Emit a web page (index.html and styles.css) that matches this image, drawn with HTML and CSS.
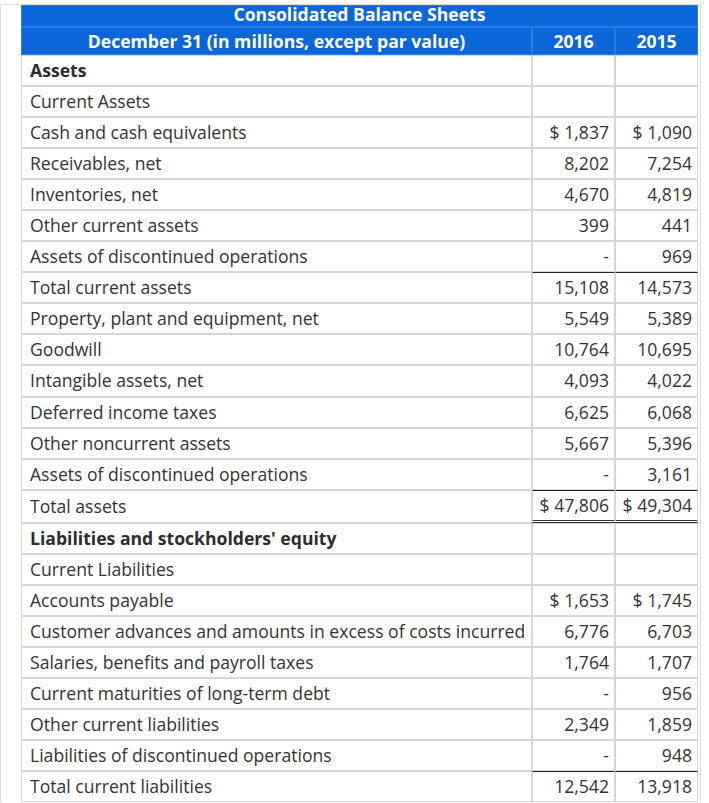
FILE: index.html
```html
<!DOCTYPE html>
<html>
<head>
<meta charset="utf-8">
<link rel="stylesheet" href="styles.css">
</head>
<body>
<div class="frame">
<table class="sheet">
  <colgroup><col class="c-label"><col class="c-val"><col class="c-val"></colgroup>
  <thead>
    <tr class="h1"><th colspan="3">Consolidated Balance Sheets</th></tr>
    <tr class="h2"><th>December 31 (in millions, except par value)</th><th>2016</th><th>2015</th></tr>
  </thead>
  <tbody>
    <tr class="sec"><td>Assets</td><td></td><td></td></tr>
    <tr><td>Current Assets</td><td></td><td></td></tr>
    <tr><td>Cash and cash equivalents</td><td class="n">$ 1,837</td><td class="n">$ 1,090</td></tr>
    <tr><td>Receivables, net</td><td class="n">8,202</td><td class="n">7,254</td></tr>
    <tr><td>Inventories, net</td><td class="n">4,670</td><td class="n">4,819</td></tr>
    <tr><td>Other current assets</td><td class="n">399</td><td class="n">441</td></tr>
    <tr><td>Assets of discontinued operations</td><td class="n">-</td><td class="n">969</td></tr>
    <tr class="tot"><td>Total current assets</td><td class="n">15,108</td><td class="n">14,573</td></tr>
    <tr><td>Property, plant and equipment, net</td><td class="n">5,549</td><td class="n">5,389</td></tr>
    <tr><td>Goodwill</td><td class="n">10,764</td><td class="n">10,695</td></tr>
    <tr><td>Intangible assets, net</td><td class="n">4,093</td><td class="n">4,022</td></tr>
    <tr><td>Deferred income taxes</td><td class="n">6,625</td><td class="n">6,068</td></tr>
    <tr><td>Other noncurrent assets</td><td class="n">5,667</td><td class="n">5,396</td></tr>
    <tr><td>Assets of discontinued operations</td><td class="n">-</td><td class="n">3,161</td></tr>
    <tr class="tot grand"><td>Total assets</td><td class="n">$ 47,806</td><td class="n">$ 49,304</td></tr>
    <tr class="sec"><td>Liabilities and stockholders' equity</td><td></td><td></td></tr>
    <tr><td>Current Liabilities</td><td></td><td></td></tr>
    <tr><td>Accounts payable</td><td class="n">$ 1,653</td><td class="n">$ 1,745</td></tr>
    <tr><td>Customer advances and amounts in excess of costs incurred</td><td class="n">6,776</td><td class="n">6,703</td></tr>
    <tr><td>Salaries, benefits and payroll taxes</td><td class="n">1,764</td><td class="n">1,707</td></tr>
    <tr><td>Current maturities of long-term debt</td><td class="n">-</td><td class="n">956</td></tr>
    <tr><td>Other current liabilities</td><td class="n">2,349</td><td class="n">1,859</td></tr>
    <tr><td>Liabilities of discontinued operations</td><td class="n">-</td><td class="n">948</td></tr>
    <tr class="tot"><td>Total current liabilities</td><td class="n">12,542</td><td class="n">13,918</td></tr>
  </tbody>
</table>
</div>
</body>
</html>
```

FILE: styles.css
```css
html, body {
  margin: 0;
  padding: 0;
  background: #fff;
}
body {
  font-family: "Open Sans", "Liberation Sans", sans-serif;
  color: #333;
}
.frame {
  margin-top: 4px;
  width: 679px;
  padding-left: 20px;
  border-top: 1px solid #dcdcdc;
  border-left: 1px solid #dcdcdc;
  border-right: 1px solid #dcdcdc;
}
.sheet {
  width: 677px;
  table-layout: fixed;
  border-collapse: separate;
  border-spacing: 0;
  font-size: 17.6px;
}
.c-label { width: 511px; }
.c-val { width: 83px; }
.sheet th {
  background: #0b67d9;
  color: #fff;
  font-weight: 700;
  text-align: center;
  border: 1px solid #2a7ce0;
  padding: 0 6px;
  white-space: nowrap;
}
.h1 th {
  height: 20px;
  line-height: 17px;
  vertical-align: top;
}
.h2 th {
  height: 26px;
  line-height: 26px;
}
.sheet td {
  border: 1px solid #d6d6d6;
  padding: 4px 8px;
  line-height: 21.05px;
  height: 21.05px;
  white-space: nowrap;
}
.sheet td.n {
  text-align: right;
  padding: 4px 5px 4px 2px;
}
.sec td {
  font-weight: 700;
  color: #2d2d2d;
}
.tot td.n {
  border-top: 1px solid #222;
}
.grand td.n {
  border-bottom: 3px double #333;
}
```
